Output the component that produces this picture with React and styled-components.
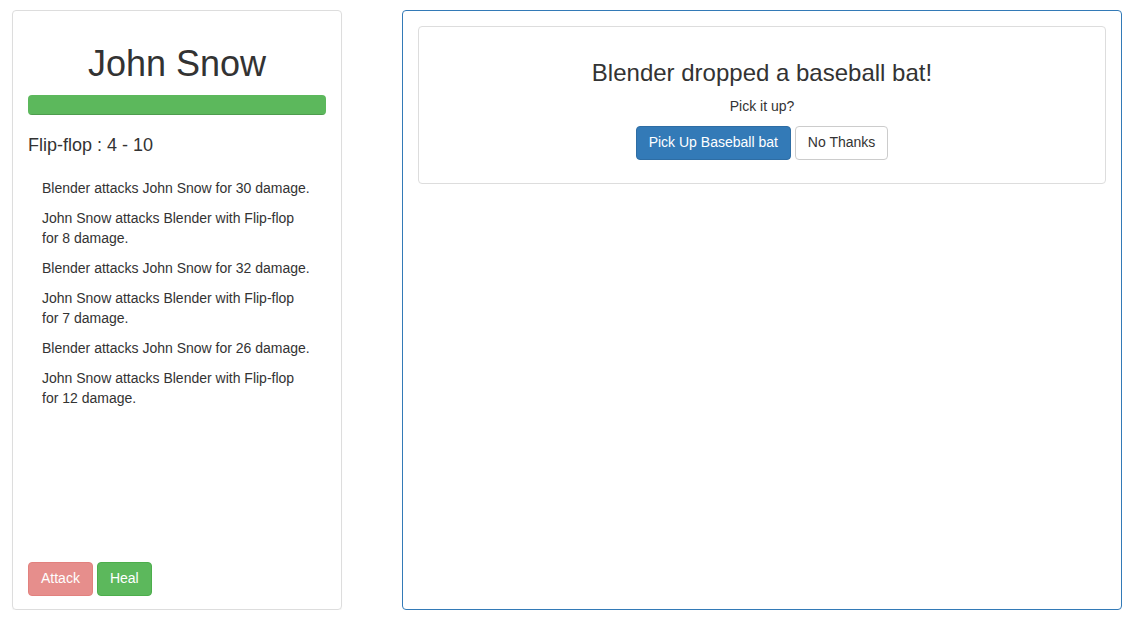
import styled, { createGlobalStyle } from 'styled-components';

const GlobalStyle = createGlobalStyle`
  * {
    box-sizing: border-box;
  }
  body {
    margin: 0;
    background: #fff;
    font-family: "Liberation Sans", Arial, Helvetica, sans-serif;
    font-size: 14px;
    line-height: 1.42857;
    color: #333;
  }
`;

const Page = styled.div`
  display: flex;
  gap: 60px;
  padding: 10px 15px 0 12px;
`;

const PlayerPanel = styled.div`
  width: 330px;
  height: 600px;
  flex-shrink: 0;
  display: flex;
  flex-direction: column;
  padding: 10px 15px 13px;
  border: 1px solid #ddd;
  border-radius: 4px;
  box-shadow: 0 1px 1px rgba(0, 0, 0, 0.05);
`;

const PlayerName = styled.h1`
  margin: 23px 0 11px;
  font-size: 36px;
  font-weight: 500;
  line-height: 1.1;
  text-align: center;
`;

const Progress = styled.div`
  height: 20px;
  margin-bottom: 21px;
  border-radius: 4px;
  background: #f5f5f5;
  overflow: hidden;
`;

const ProgressBar = styled.div`
  height: 100%;
  background: #5cb85c;
  box-shadow: inset 0 -1px 0 rgba(0, 0, 0, 0.15);
`;

const Weapon = styled.h4`
  margin: 0 0 23px;
  font-size: 18px;
  font-weight: 500;
  line-height: 1.1;
`;

const Log = styled.ul`
  list-style: none;
  margin: 0;
  padding: 0 14px;
`;

const LogItem = styled.li`
  margin-bottom: 10px;
  line-height: 20px;
`;

const ButtonRow = styled.div`
  display: flex;
  gap: 4px;
  margin-top: auto;
  justify-content: ${(p) => (p.$center ? 'center' : 'flex-start')};
`;

const colors = {
  danger: { bg: '#d9534f', border: '#d43f3a', text: '#fff' },
  success: { bg: '#5cb85c', border: '#4cae4c', text: '#fff' },
  primary: { bg: '#337ab7', border: '#2e6da4', text: '#fff' },
  default: { bg: '#fff', border: '#ccc', text: '#333' },
};

const Button = styled.button`
  display: inline-block;
  height: 34px;
  padding: 6px 12px;
  font-family: inherit;
  font-size: 14px;
  line-height: 1.42857;
  border-radius: 4px;
  border: 1px solid ${(p) => colors[p.$variant].border};
  background: ${(p) => colors[p.$variant].bg};
  color: ${(p) => colors[p.$variant].text};
  cursor: pointer;

  &:disabled {
    opacity: 0.65;
    cursor: not-allowed;
  }
`;

const ArenaPanel = styled.div`
  flex: 1;
  height: 600px;
  padding: 15px;
  border: 1px solid #337ab7;
  border-radius: 4px;
`;

const LootCard = styled.div`
  padding: 15px 15px 23px;
  border: 1px solid #ddd;
  border-radius: 4px;
  text-align: center;
`;

const LootTitle = styled.h3`
  margin: 18px 0 11px;
  font-size: 24px;
  font-weight: 500;
  line-height: 1.1;
`;

const LootQuestion = styled.p`
  margin: 0 0 9px;
`;

const log = [
  'Blender attacks John Snow for 30 damage.',
  'John Snow attacks Blender with Flip-flop for 8 damage.',
  'Blender attacks John Snow for 32 damage.',
  'John Snow attacks Blender with Flip-flop for 7 damage.',
  'Blender attacks John Snow for 26 damage.',
  'John Snow attacks Blender with Flip-flop for 12 damage.',
];

const App = () => {
  const health = 100;

  return (
    <>
      <GlobalStyle />
      <Page>
        <PlayerPanel>
          <PlayerName>John Snow</PlayerName>
          <Progress>
            <ProgressBar style={{ width: `${health}%` }} />
          </Progress>
          <Weapon>Flip-flop : 4 - 10</Weapon>
          <Log>
            {log.map((line, i) => (
              <LogItem key={i}>{line}</LogItem>
            ))}
          </Log>
          <ButtonRow>
            <Button $variant="danger" disabled>
              Attack
            </Button>
            <Button $variant="success">Heal</Button>
          </ButtonRow>
        </PlayerPanel>

        <ArenaPanel>
          <LootCard>
            <LootTitle>Blender dropped a baseball bat!</LootTitle>
            <LootQuestion>Pick it up?</LootQuestion>
            <ButtonRow $center>
              <Button $variant="primary">Pick Up Baseball bat</Button>
              <Button $variant="default">No Thanks</Button>
            </ButtonRow>
          </LootCard>
        </ArenaPanel>
      </Page>
    </>
  );
};

export default App;
